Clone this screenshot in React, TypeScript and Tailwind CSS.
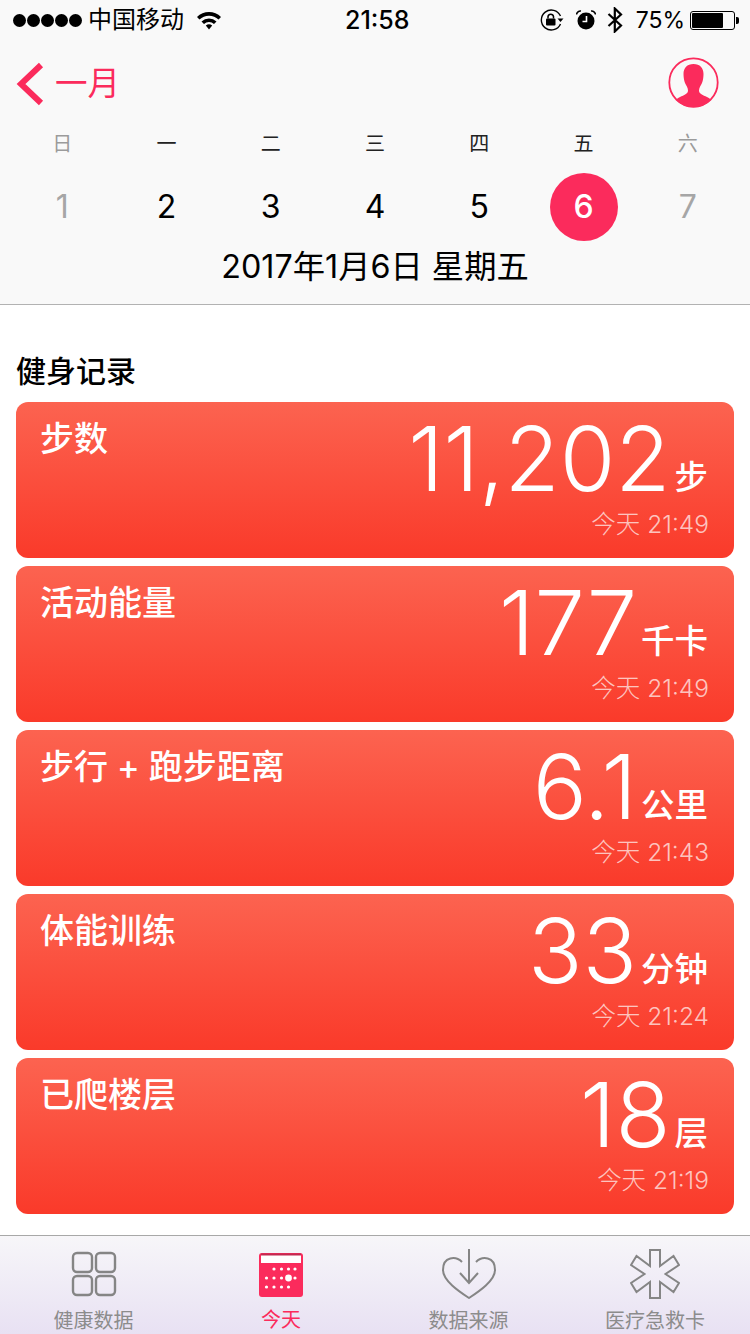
import React from 'react';

const sans = "font-['Inter','Noto_Sans_CJK_SC',sans-serif]";

const weekDays = [
  { label: '日', day: '1', muted: true },
  { label: '一', day: '2' },
  { label: '二', day: '3' },
  { label: '三', day: '4' },
  { label: '四', day: '5' },
  { label: '五', day: '6', active: true },
  { label: '六', day: '7', muted: true },
];

const records = [
  { title: '步数', value: '11,202', unit: '步', time: '今天 21:49' },
  { title: '活动能量', value: '177', unit: '千卡', time: '今天 21:49' },
  { title: '步行 + 跑步距离', value: '6.1', unit: '公里', time: '今天 21:43' },
  { title: '体能训练', value: '33', unit: '分钟', time: '今天 21:24' },
  { title: '已爬楼层', value: '18', unit: '层', time: '今天 21:19' },
];

const StatusBar = () => (
  <div className="relative flex h-10 items-center justify-between pl-[13px] pr-[11px] text-black">
    <div className="flex items-center">
      <div className="flex gap-[1px]">
        {[0, 1, 2, 3, 4].map((i) => (
          <span key={i} className="h-[13px] w-[13px] rounded-full bg-black" />
        ))}
      </div>
      <span className="ml-[6px] text-[24px] leading-none">中国移动</span>
      <svg width="26" height="20" viewBox="0 0 26 20" className="ml-[12px]">
        <path d="M1 7 A17 17 0 0 1 25 7 L22.5 9.6 A13.5 13.5 0 0 0 3.5 9.6 Z" fill="#000" />
        <path d="M5.5 11.5 A11 11 0 0 1 20.5 11.5 L18 14 A7.5 7.5 0 0 0 8 14 Z" fill="#000" />
        <path d="M9.8 15.6 A5 5 0 0 1 16.2 15.6 L13 19.4 Z" fill="#000" />
      </svg>
    </div>
    <span className="absolute left-[345px] top-[6px] text-[25px] font-medium leading-[28px]">21:58</span>
    <div className="flex items-center">
      <svg width="24" height="22" viewBox="0 0 24 22">
        <path d="M20.5 7 A10 10 0 1 0 20.5 15" fill="none" stroke="#000" strokeWidth="1.4" />
        <path d="M17.5 9.5 H23.5 L20.5 13 Z" fill="#000" />
        <rect x="6" y="9.5" width="9.5" height="7" rx="1" fill="#000" />
        <path d="M8 9.5 V7.5 A2.8 2.8 0 0 1 13.5 7.5 V9.5" fill="none" stroke="#000" strokeWidth="1.5" />
      </svg>
      <svg width="20" height="20" viewBox="0 0 20 20" className="ml-[12px]">
        <circle cx="10" cy="11" r="8.5" fill="#000" />
        <path d="M10.5 6 V11.5 H6.5" fill="none" stroke="#fff" strokeWidth="1.6" />
        <path d="M0.5 4.5 A4 4 0 0 1 5 1 M19.5 4.5 A4 4 0 0 0 15 1" fill="none" stroke="#000" strokeWidth="1.6" />
      </svg>
      <svg width="16" height="26" viewBox="0 0 16 26" className="ml-[11px]">
        <path d="M1.5 7 L14 18.5 L7.8 24.5 V1.5 L14 7.5 L1.5 19" fill="none" stroke="#000" strokeWidth="2.2" />
      </svg>
      <span className="ml-[13px] text-[23px] leading-none">75%</span>
      <div className="ml-[5px] flex h-[19px] w-[45px] rounded-[3px] border border-black p-[1px]">
        <div className="h-full w-[31px] rounded-[1px] bg-black" />
      </div>
      <div className="ml-[1px] h-[7px] w-[3px] rounded-r-[2px] bg-black" />
    </div>
  </div>
);

const Header = () => (
  <div className="h-[265px] border-b border-[#b2b2b2]">
    <div className="flex h-[89px] items-start justify-between pl-[16px] pr-[31px]">
      <div className="flex items-center pt-[22px]">
        <svg width="28" height="44" viewBox="0 0 28 44">
          <path d="M25 3 L5 22 L25 41" fill="none" stroke="#fb2b5c" strokeWidth="6" />
        </svg>
        <span className="ml-[11px] text-[32.5px] leading-none text-[#fb2b5c]">一月</span>
      </div>
      <svg width="51" height="51" viewBox="0 0 51 51" className="mt-[17px]">
        <circle cx="25.5" cy="25.5" r="24.2" fill="none" stroke="#fb2b5c" strokeWidth="1.8" />
        <path
          d="M25.5 7 C19 7 15.5 11 15.5 17 C15.5 20 16 23.5 17 26 C18 28.5 20 30.5 20 33.5 C20 37 16 38 12 40 C10 41 8.5 42 8 43 A24 24 0 0 0 43 43 C42.5 42 41 41 39 40 C35 38 31 37 31 33.5 C31 30.5 33 28.5 34 26 C35 23.5 35.5 20 35.5 17 C35.5 11 32 7 25.5 7 Z"
          fill="#fb2b5c"
        />
      </svg>
    </div>
    <div className="grid grid-cols-7 px-[10px]">
      {weekDays.map((d) => (
        <div key={d.label} className="flex flex-col items-center">
          <span className={`text-[20px] leading-[30px] ${d.muted ? 'text-[#9b9b9b]' : 'text-[#222]'}`}>{d.label}</span>
          <span
            className={`mt-[14px] flex h-[68px] w-[68px] items-center justify-center rounded-full text-[32px] ${
              d.active ? 'bg-[#fb2b5c] font-medium text-white' : d.muted ? 'text-[#a6a6a6]' : 'text-black'
            }`}
          >
            {d.day}
          </span>
        </div>
      ))}
    </div>
    <div className="mt-[4px] text-center text-[32.3px] leading-[44px] text-black">2017年1月6日 星期五</div>
  </div>
);

const RecordCard = ({ title, value, unit, time }: (typeof records)[number]) => (
  <div className="h-[156px] rounded-[12px] bg-linear-to-b/srgb from-[#fc6350] to-[#fa3a2a] pl-[24px] pr-[26px] text-white">
    <div className="flex items-start justify-between">
      <span className="pt-[17px] text-[34px] font-medium leading-[40px]">{title}</span>
      <div className="flex flex-col items-end">
        <div className="flex items-end">
          <span className="pt-[2px] text-[90px] font-[280] leading-[110px]">{value}</span>
          <span className="mb-[17px] ml-[4px] text-[33.5px] font-medium leading-[40px]">{unit}</span>
        </div>
        <span className="-mr-[1px] -mt-[5px] text-[24.5px] font-light leading-[30px] text-white/70">{time}</span>
      </div>
    </div>
  </div>
);

const TabBar = () => (
  <div className="flex h-[99px] border-t border-[#a8a8a8] bg-linear-to-b/srgb from-[#f7f6f9] to-[#e8e1f3]">
    <div className="flex w-[187px] flex-col items-center pt-[15px] text-[#8c8c8c]">
      <svg width="46" height="46" viewBox="0 0 46 46" fill="none" stroke="#858585" strokeWidth="2.4">
        <rect x="2" y="2" width="19" height="19" rx="4" />
        <rect x="25" y="2" width="19" height="19" rx="4" />
        <rect x="2" y="25" width="19" height="19" rx="4" />
        <rect x="25" y="25" width="19" height="19" rx="4" />
      </svg>
      <span className="mt-[12px] text-[20px] leading-[24px]">健康数据</span>
    </div>
    <div className="flex w-[188px] flex-col items-center pt-[17px] text-[#fb2b5c]">
      <svg width="44" height="44" viewBox="0 0 44 44">
        <rect width="44" height="44" rx="3" fill="#fb2b5c" />
        <rect x="2" y="2" width="40" height="8" fill="#fff" />
        <path d="M2 1.5 H42" stroke="#c22a50" strokeWidth="2" />
        {[15, 22.5, 29.5, 36].map((x) => (
          <circle key={x} cx={x} cy="16" r="1.6" fill="#fff" />
        ))}
        {[7.5, 15, 22.5, 36].map((x) => (
          <circle key={x} cx={x} cy="25" r="1.6" fill="#fff" />
        ))}
        <circle cx="29.5" cy="25" r="3.4" fill="#fff" />
        {[7.5, 15, 22.5, 29.5].map((x) => (
          <circle key={x} cx={x} cy="34" r="1.6" fill="#fff" />
        ))}
      </svg>
      <span className="mt-[11px] text-[20px] leading-[24px]">今天</span>
    </div>
    <div className="flex w-[187px] flex-col items-center pt-[13px] text-[#8c8c8c]">
      <svg width="54" height="50" viewBox="0 0 54 50" fill="none" stroke="#858585" strokeWidth="2">
        <path d="M20 13 C14 7 1 7 1 21 C1 32 18 43 27 49 C36 43 53 32 53 21 C53 7 40 7 34 13" />
        <path d="M27 0 V34 M18 24 L27 34 L36 24" />
      </svg>
      <span className="mt-[10px] text-[20px] leading-[24px]">数据来源</span>
    </div>
    <div className="flex w-[188px] flex-col items-center pr-[2px] pt-[13px] text-[#8c8c8c]">
      <svg width="50" height="50" viewBox="0 0 50 50" fill="none" stroke="#858585" strokeWidth="2">
        <path d="M20 1 H30 V17 L43.5 7 L49 16 L35.5 25 L49 34 L43.5 43 L30 33 V49 H20 V33 L6.5 43 L1 34 L14.5 25 L1 16 L6.5 7 L20 17 Z" />
      </svg>
      <span className="mt-[10px] text-[20px] leading-[24px]">医疗急救卡</span>
    </div>
  </div>
);

export default function App() {
  return (
    <div className={`${sans} flex h-[1334px] w-[750px] flex-col overflow-hidden bg-white`}>
      <div className="bg-[#f9f9f9]">
        <StatusBar />
        <Header />
      </div>
      <div className="flex-1 px-[16px]">
        <h2 className="mb-[13px] mt-[48px] text-[30px] font-medium leading-[36px] text-black">健身记录</h2>
        <div className="flex flex-col gap-[8px]">
          {records.map((r) => (
            <RecordCard key={r.title} {...r} />
          ))}
        </div>
      </div>
      <TabBar />
    </div>
  );
}
